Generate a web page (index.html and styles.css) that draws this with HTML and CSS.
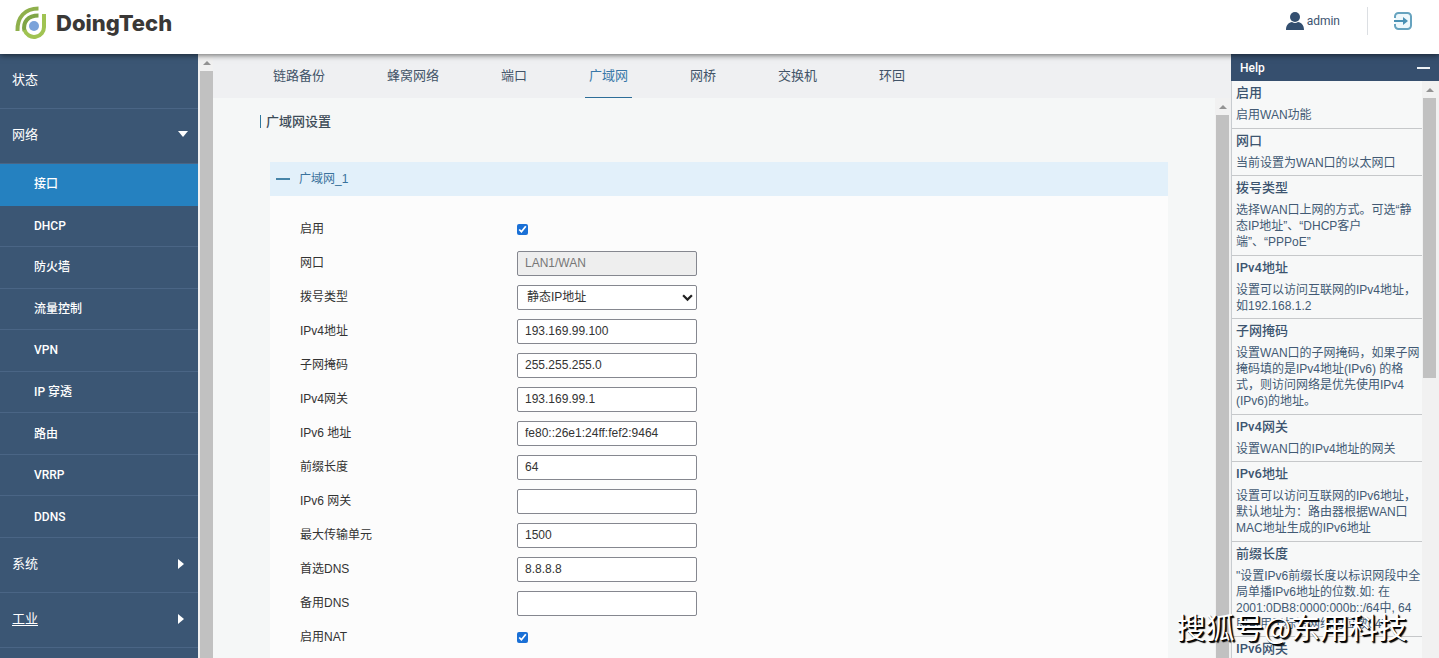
FILE: index.html
```html
<!DOCTYPE html>
<html lang="zh-CN">
<head>
<meta charset="utf-8">
<title>DoingTech</title>
<link rel="stylesheet" href="styles.css">
</head>
<body>
<header class="topbar">
  <div class="brand">
    <svg class="brand-mark" viewBox="0 0 34 36" aria-hidden="true">
      <g fill="none" stroke-width="4">
        <path d="M3.500 28C3 14 11 5.500 24.500 5.500" stroke="#8fb04c"/>
        <path d="M10.500 28C8.500 19 14 12.500 24.500 12.500" stroke="#7fa547"/>
        <path d="M30 11V23.500A10 10 0 0 1 10.500 27" stroke="#a0c352"/>
      </g>
      <circle cx="20" cy="23" r="5" fill="#7ba3da"/>
    </svg>
    <span class="brand-name">DoingTech</span>
  </div>
  <div class="account">
    <svg class="user-icon" viewBox="0 0 18 18" aria-hidden="true"><circle cx="9" cy="5" r="5" fill="#344f70"/><path d="M0 18C0 12.500 3 10.500 6 10Q9 12 12 10C15 10.500 18 12.500 18 18Z" fill="#344f70"/></svg>
    <span class="user-name">admin</span>
    <button class="logout" aria-label="退出">
      <svg viewBox="0 0 20 20" aria-hidden="true"><path d="M2 7V5.500A3.500 3.500 0 0 1 5.500 2H14.500A3.500 3.500 0 0 1 18 5.500V14.500A3.500 3.500 0 0 1 14.500 18H5.500A3.500 3.500 0 0 1 2 14.500V13" fill="#eef8fc" stroke="#66a3bf" stroke-width="2"/><path d="M1 10H11" fill="none" stroke="#4a91b4" stroke-width="2"/><path d="M10 6L15 10L10 14Z" fill="#4a91b4"/></svg>
    </button>
  </div>
</header>
<div class="workspace">
  <nav class="sidebar">
    <a class="nav-item" href="#">状态</a>
    <a class="nav-item" href="#">网络<span class="caret-down"></span></a>
    <div class="subnav">
      <a class="active" href="#">接口</a>
      <a href="#">DHCP</a>
      <a href="#">防火墙</a>
      <a href="#">流量控制</a>
      <a href="#">VPN</a>
      <a href="#">IP 穿透</a>
      <a href="#">路由</a>
      <a href="#">VRRP</a>
      <a href="#">DDNS</a>
    </div>
    <a class="nav-item" href="#">系统<span class="caret-right"></span></a>
    <a class="nav-item underlined" href="#">工业<span class="caret-right"></span></a>
  </nav>
  <div class="scrollbar nav-scroll"><span class="arrow"></span><span class="thumb"></span></div>
  <main class="main">
    <nav class="tabs">
      <a href="#">链路备份</a>
      <a href="#">蜂窝网络</a>
      <a href="#">端口</a>
      <a class="current" href="#">广域网</a>
      <a href="#">网桥</a>
      <a href="#">交换机</a>
      <a href="#">环回</a>
    </nav>
    <div class="content">
      <div class="page">
        <h1 class="page-title">广域网设置</h1>
        <section class="panel">
          <h2 class="panel-head"><span class="minus"></span>广域网_1</h2>
          <form class="form">
            <div class="row"><label for="enable">启用</label><input id="enable" type="checkbox" checked></div>
            <div class="row"><label for="port">网口</label><input class="field" id="port" type="text" value="LAN1/WAN" disabled></div>
            <div class="row"><label for="dial">拨号类型</label><span class="select-wrap"><select class="field" id="dial"><option>静态IP地址</option></select><svg class="chevron" viewBox="0 0 10 7" aria-hidden="true"><path d="M1 1L5 5L9 1" fill="none" stroke="#222" stroke-width="2"/></svg></span></div>
            <div class="row"><label for="ip4">IPv4地址</label><input class="field" id="ip4" type="text" value="193.169.99.100"></div>
            <div class="row"><label for="mask">子网掩码</label><input class="field" id="mask" type="text" value="255.255.255.0"></div>
            <div class="row"><label for="gw4">IPv4网关</label><input class="field" id="gw4" type="text" value="193.169.99.1"></div>
            <div class="row"><label for="ip6">IPv6 地址</label><input class="field" id="ip6" type="text" value="fe80::26e1:24ff:fef2:9464"></div>
            <div class="row"><label for="prefix">前缀长度</label><input class="field" id="prefix" type="text" value="64"></div>
            <div class="row"><label for="gw6">IPv6 网关</label><input class="field" id="gw6" type="text"></div>
            <div class="row"><label for="mtu">最大传输单元</label><input class="field" id="mtu" type="text" value="1500"></div>
            <div class="row"><label for="dns1">首选DNS</label><input class="field" id="dns1" type="text" value="8.8.8.8"></div>
            <div class="row"><label for="dns2">备用DNS</label><input class="field" id="dns2" type="text"></div>
            <div class="row"><label for="nat">启用NAT</label><input id="nat" type="checkbox" checked></div>
          </form>
        </section>
      </div>
      <div class="scrollbar page-scroll"><span class="arrow"></span><span class="thumb"></span></div>
    </div>
  </main>
  <aside class="help">
    <div class="help-head">Help<button class="collapse" aria-label="收起"></button></div>
    <div class="help-body">
      <div class="help-list">
        <section><h3>启用</h3><p>启用WAN功能</p></section>
        <section><h3>网口</h3><p>当前设置为WAN口的以太网口</p></section>
        <section><h3>拨号类型</h3><p>选择WAN口上网的方式。可选“静<br>态IP地址”、“DHCP客户<br>端”、“PPPoE”</p></section>
        <section><h3>IPv4地址</h3><p>设置可以访问互联网的IPv4地址，<br>如192.168.1.2</p></section>
        <section><h3>子网掩码</h3><p>设置WAN口的子网掩码，如果子网<br>掩码填的是IPv4地址(IPv6) 的格<br>式，则访问网络是优先使用IPv4<br>(IPv6)的地址。</p></section>
        <section><h3>IPv4网关</h3><p>设置WAN口的IPv4地址的网关</p></section>
        <section><h3>IPv6地址</h3><p>设置可以访问互联网的IPv6地址，<br>默认地址为：路由器根据WAN口<br>MAC地址生成的IPv6地址</p></section>
        <section><h3>前缀长度</h3><p>"设置IPv6前缀长度以标识网段中全<br>局单播IPv6地址的位数.如: 在<br>2001:0DB8:0000:000b::/64中, 64<br>即可用于标识网络的位数64"</p></section>
        <section><h3>IPv6网关</h3></section>
      </div>
      <div class="scrollbar help-scroll"><span class="arrow"></span><span class="thumb"></span></div>
    </div>
  </aside>
</div>
<div class="watermark">搜狐号@东用科技</div>
</body>
</html>
```
FILE: styles.css
```css
* { box-sizing: border-box; }
body {
  margin: 0;
  height: 100vh;
  display: flex;
  flex-direction: column;
  overflow: hidden;
  font: 12px/16px "Liberation Sans", "Noto Sans CJK SC", sans-serif;
  color: #333;
  background: #f5f7f7;
}
a { color: inherit; text-decoration: none; }
h1, h2, h3, p { margin: 0; }
button { border: 0; padding: 0; background: none; }

.topbar {
  flex: none;
  height: 54px;
  padding: 0 26px 12px 14px;
  display: flex;
  justify-content: space-between;
  align-items: center;
  background: #fff;
  box-shadow: 0 1px 6px rgba(0, 0, 0, .6);
  z-index: 2;
}
.brand { display: flex; align-items: center; gap: 8px; }
.brand-mark { width: 34px; height: 36px; }
.brand-name { font: 800 22px/32px Inter, sans-serif; color: #3a3836; padding-top: 4px; }
.account { display: flex; align-items: center; color: #3c5470; height: 28px; }
.user-icon { width: 18px; height: 18px; margin-right: 3px; }
.user-name { font: 12px/20px Roboto, sans-serif; padding-right: 27px; }
.logout { height: 28px; padding-left: 25px; border-left: 1px solid #dcdfe3; display: flex; align-items: center; }
.logout svg { width: 20px; height: 20px; }

.workspace { flex: 1; min-height: 0; display: flex; }
.sidebar { flex: none; width: 198px; background: #3b5674; color: #fff; overflow: hidden; }
.nav-item {
  display: flex;
  align-items: center;
  justify-content: space-between;
  height: 55px;
  padding: 0 14px 2px 12px;
  border-bottom: 1px solid #4a6585;
  font-size: 13px;
}
.underlined { text-decoration: underline; text-underline-offset: 2px; }
.caret-down { border: 5px solid transparent; border-top: 6px solid #fff; border-bottom: 0; margin: 0 -4px 3px 0; }
.caret-right { border: 5px solid transparent; border-left: 6px solid #fff; border-right: 0; }
.subnav { display: grid; grid-auto-rows: 1fr; height: 374px; }
.subnav a {
  padding: 0 34px;
  display: flex;
  align-items: center;
  border-bottom: 1px solid #4a6585;
  font-family: Roboto, "Noto Sans CJK SC", sans-serif;
  font-weight: 500;
}
.subnav .active { background: #2581c0; border-color: #2581c0; }

.scrollbar {
  flex: none;
  width: 15px;
  padding: 0 1px;
  display: flex;
  flex-direction: column;
  background: #f1f1f1;
}
.arrow { flex: none; height: 17px; display: grid; place-items: center; }
.arrow::before { content: ""; border: 4px solid transparent; border-bottom-color: #939393; border-top: 0; }
.thumb { flex: 1; background: #c1c1c1; }
.nav-scroll { padding: 0 0 0 2px; }
.page-scroll { width: 16px; padding-right: 2px; }

.main { flex: 1; min-width: 0; display: flex; flex-direction: column; background: #f5f7f7; }
.tabs {
  flex: none;
  height: 44px;
  padding-left: 56px;
  display: flex;
  gap: 54px;
  background: #eff0f2;
  font-size: 13px;
  color: #425468;
}
.tabs a { padding: 0 4px; line-height: 44px; }
.tabs .current { color: #3777a8; border-bottom: 1px solid #2d6d98; }
.content { flex: 1; min-height: 0; display: flex; }
.page { flex: 1; padding: 15px 47px 0 47px; overflow: hidden; }
.page-title {
  display: flex;
  align-items: center;
  gap: 5px;
  font-size: 13px;
  line-height: 17px;
  font-weight: 500;
  color: #3d4c58;
}
.page-title::before { content: ""; width: 1px; height: 13px; background: #2f789f; }
.panel { margin: 32px 0 0 10px; background: #fcfcfc; }
.panel-head {
  display: flex;
  align-items: center;
  height: 34px;
  padding: 0 6px;
  gap: 9px;
  background: #e2f0fa;
  font-size: 12px;
  font-weight: 400;
  color: #3a729c;
}
.minus { width: 14px; height: 2px; background: #4684a8; }
.form { padding: 16px 30px; }
.row { display: grid; grid-template-columns: 217px 180px; height: 34px; align-items: center; }
.row input[type="checkbox"] { margin: 0; width: 11px; height: 11px; accent-color: #1a70d6; }
.field {
  width: 100%;
  height: 25px;
  padding: 0 7px;
  border: 1px solid #85878f;
  border-radius: 2px;
  background: #fff;
  font: inherit;
  color: #333;
}
.field:disabled { background: #eee; color: #777; }
.select-wrap { position: relative; }
select.field { display: block; appearance: none; padding-left: 9px; }
.chevron { position: absolute; right: 4px; top: 9px; width: 11px; height: 8px; pointer-events: none; }

.help { flex: none; width: 208px; display: flex; flex-direction: column; color: #425a74; }
.help-head {
  flex: none;
  height: 27px;
  padding: 0 9px;
  display: flex;
  align-items: center;
  justify-content: space-between;
  background: #364f6e;
  color: #fff;
  font: 500 12px/16px Roboto, sans-serif;
}
.collapse { width: 13px; height: 2px; background: #eef2f6; }
.help-body { flex: 1; min-height: 0; display: flex; border-left: 1px solid #c8ccd0; background: #f7f8f8; }
.help-list { flex: 1; overflow: hidden; }
.help-list section { padding: 3px 0 4px 4px; border-bottom: 1px solid #c6c8ca; }
.help-list section:nth-child(odd) { padding-bottom: 5px; }
.help-list h3 {
  font: 500 13px/18px Roboto, "Noto Sans CJK SC", sans-serif;
  margin-bottom: 5px;
  color: #3c546f;
}
.help-list p { white-space: nowrap; }
.help-scroll { width: 17px; padding-right: 3px; }
.help-scroll .thumb { flex: none; height: 280px; }

.watermark {
  position: absolute;
  right: 32px;
  bottom: 12px;
  z-index: 3;
  font: 29px/40px "Noto Sans CJK SC", sans-serif;
  color: #fff;
  text-shadow: 1px 1px 0 #000, 2px 2px 1px #000;
}
```
